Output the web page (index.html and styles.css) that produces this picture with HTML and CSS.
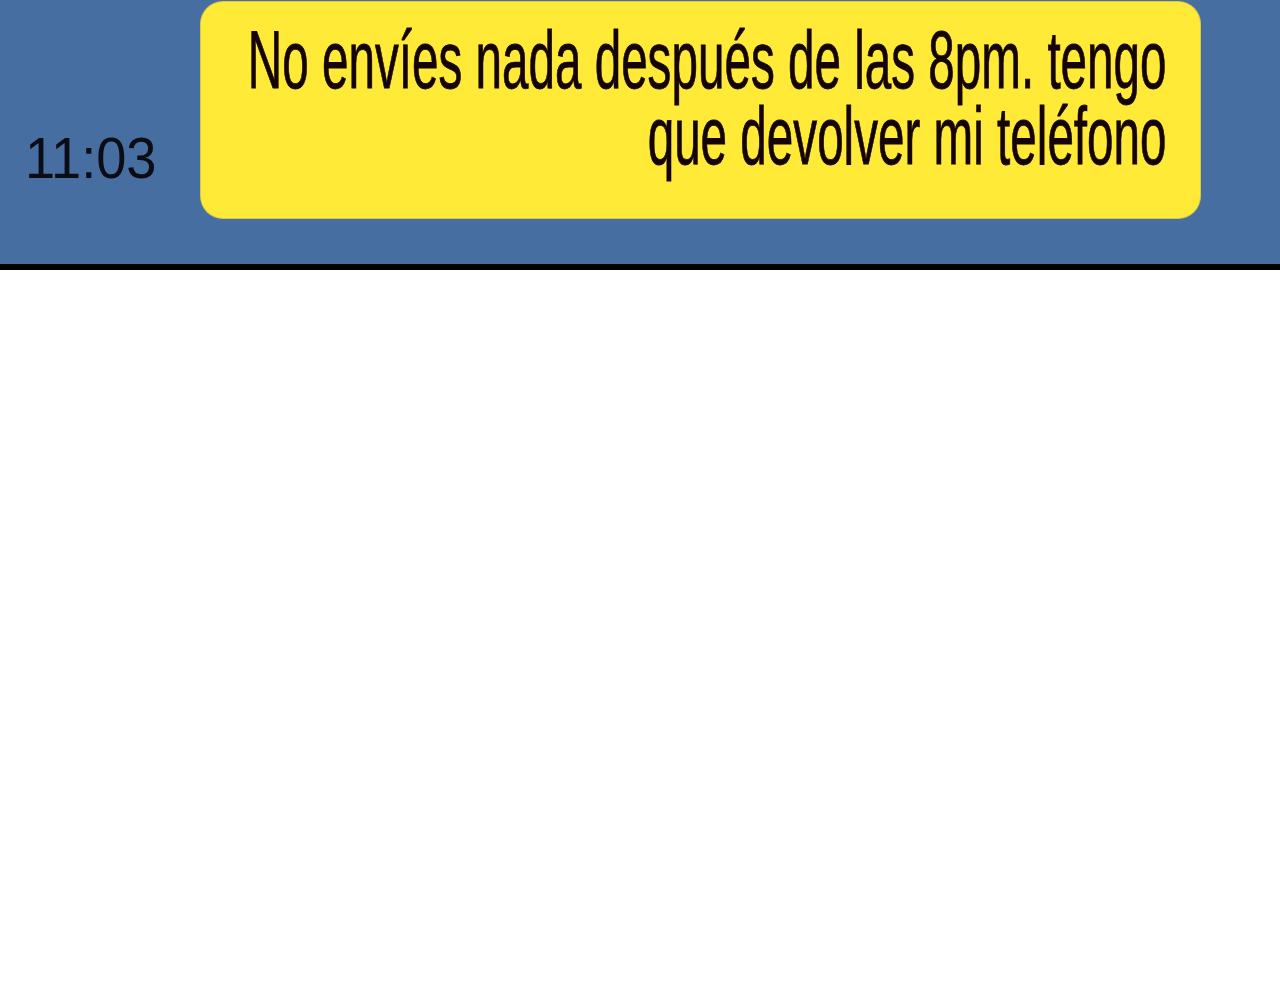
FILE: index.html
```html
<!DOCTYPE html>
<html lang="es">
<head>
    <meta charset="UTF-8">
    <meta name="viewport" content="width=device-width, initial-scale=1.0">
    <title>Mensaje</title>
    <link rel="stylesheet" href="styles.css">
</head>
<body>

    <!-- fila del mensaje -->
    <div class="chat-row">
        <div class="time">11:03</div>
        <div class="bubble">
            <p class="message">No envíes nada después de las 8pm. tengo<br>que devolver mi teléfono</p>
        </div>
    </div>

</body>
</html>
```

FILE: styles.css
```css
body {
    margin: 0;
    background-color: #fff;
    font-family: 'Liberation Sans', Arial, sans-serif;
}

.chat-row {
    display: flex;
    height: 264px;
    background-color: #466ea0;
    border-bottom: 6px solid #000;
}

.time {
    width: 176px;
    padding-left: 25px;
    padding-top: 130px;
    font-size: 57px;
    line-height: 57px;
    color: #0c0c14;
    transform: scaleX(0.95);
    transform-origin: 25px 0;
}

.bubble {
    display: flex;
    justify-content: flex-end;
    width: 966px;
    height: 196px;
    margin-top: 2px;
    padding: 20px 33px 0 0;
    background-color: #ffea38;
    border-radius: 22px;
    box-shadow: 0 0 0 1px #d8c94a;
    overflow: hidden;
}

.message {
    flex-shrink: 0;
    margin: 0;
    font-size: 81px;
    line-height: 76px;
    text-align: right;
    white-space: nowrap;
    color: #140406;
    -webkit-text-stroke: 0.8px #140406;
    transform: scaleX(0.588); /* letra estrecha */
    transform-origin: right top;
}
```
